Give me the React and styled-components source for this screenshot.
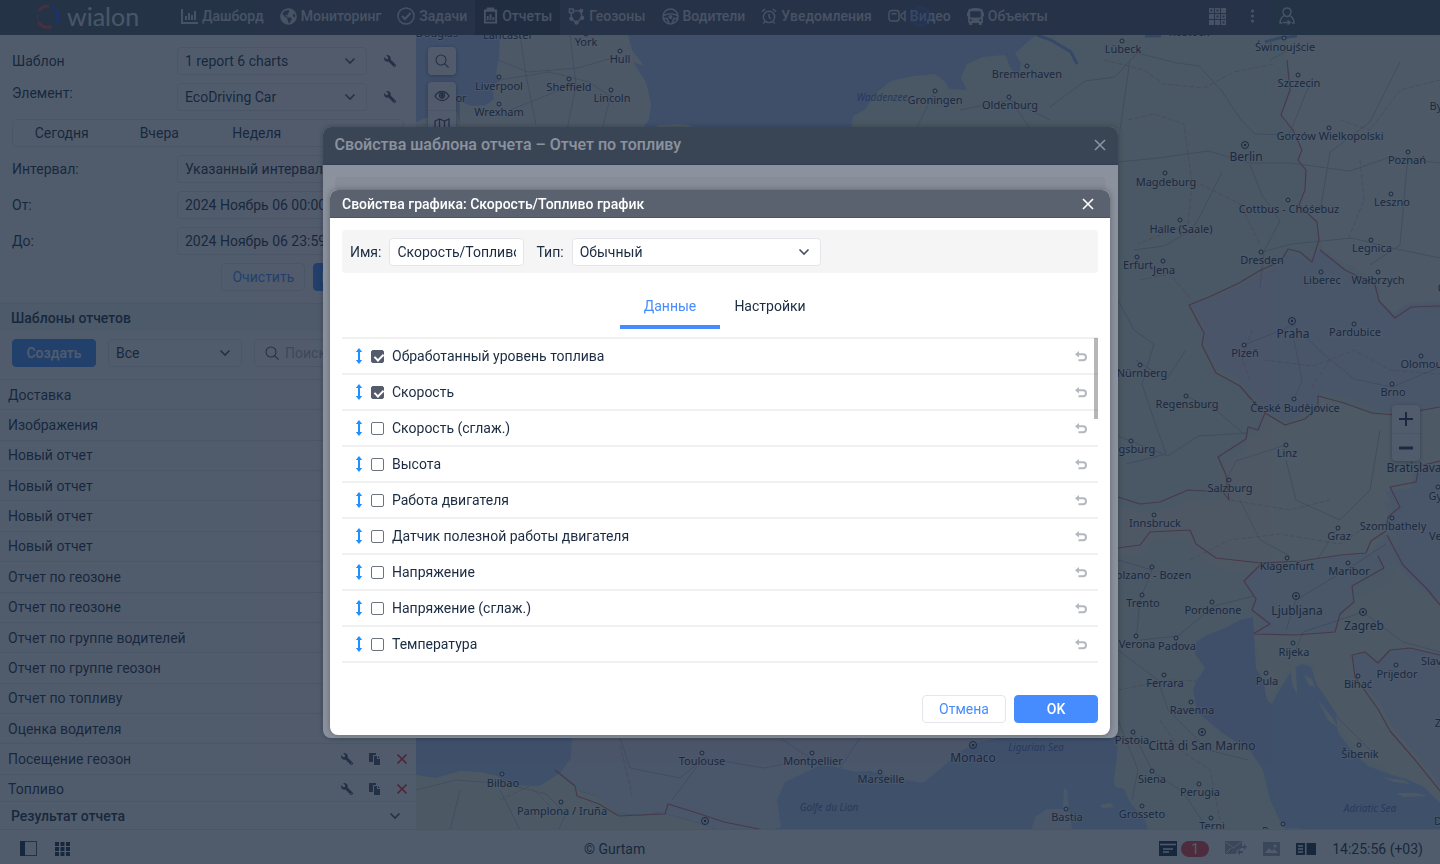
import React, { useState } from 'react';
import styled, { createGlobalStyle, css } from 'styled-components';
import { FaWrench, FaGlobeAmericas, FaBus } from 'react-icons/fa';

const GlobalStyle = createGlobalStyle`
  * {
    box-sizing: border-box;
  }
  body {
    margin: 0;
    font-family: Roboto, "Liberation Sans", sans-serif;
    font-size: 14px;
    line-height: 20px;
    color: #1b2b41;
    overflow: hidden;
  }
  button, input, select {
    font: inherit;
    color: inherit;
    margin: 0;
  }
`;

const Page = styled.div`
  display: flex;
  flex-direction: column;
  height: 100vh;
  background: #fff;
`;

const TopBar = styled.header`
  display: flex;
  height: 35px;
  flex: none;
  background: #535b6a;
  color: #d5d9df;
  padding-right: 145px;
`;

const Logo = styled.a`
  display: flex;
  align-items: center;
  gap: 7px;
  width: 173px;
  padding: 0 0 3px 35px;
  color: #e2e5ea;
  text-decoration: none;
  font-family: Lato, sans-serif;
  font-size: 25px;
  line-height: 28px;
`;

const Nav = styled.nav`
  display: flex;
  flex: 1;
`;

const NavItem = styled.a`
  position: relative;
  display: flex;
  align-items: center;
  gap: 4px;
  padding: 0 8px 3px;
  color: inherit;
  text-decoration: none;
  font-weight: 500;
  background: ${(p) => (p.$active ? '#39414f' : 'transparent')};
  svg {
    flex: none;
  }
`;

const Pulse = styled.span`
  position: absolute;
  left: 30px;
  top: 6px;
  width: 21px;
  height: 21px;
  border-radius: 50%;
  border: 3px solid rgba(120, 150, 200, 0.2);
  background: rgba(40, 100, 220, 0.3);
`;

const TopIcons = styled.div`
  display: flex;
  align-items: center;
  gap: 18px;
  padding-bottom: 3px;
`;

const IconButton = styled.button`
  display: inline-flex;
  align-items: center;
  justify-content: center;
  padding: 0;
  border: 0;
  background: none;
`;

const Main = styled.main`
  display: flex;
  flex: 1;
  min-height: 0;
`;

const Sidebar = styled.aside`
  display: flex;
  flex-direction: column;
  width: 416px;
  flex: none;
  background: #fff;
`;

const Form = styled.div`
  display: grid;
  grid-template-columns: 153px 1fr;
  column-gap: 12px;
  row-gap: 8px;
  padding: 12px 12px;
`;

const Label = styled.label`
  line-height: ${(p) => (p.$top ? '20px' : '28px')};
`;

const FieldRow = styled.div`
  display: flex;
  gap: 17px;
`;

const field = css`
  width: 100%;
  height: 28px;
  padding: 0 7px;
  border: 1px solid #e3e6ea;
  border-radius: 4px;
  background: #fff;
`;

const TextInput = styled.input`
  ${field}
  &::placeholder {
    color: #a8adb5;
  }
`;

const SelectBox = styled.div`
  position: relative;
  width: ${(p) => p.$width || '100%'};
  select {
    ${field}
    appearance: none;
  }
  svg {
    position: absolute;
    right: 11px;
    top: 10px;
    pointer-events: none;
  }
`;

const SearchBox = styled.div`
  position: relative;
  flex: 1;
  svg {
    position: absolute;
    left: 11px;
    top: 7px;
  }
  input {
    padding-left: 30px;
  }
`;

const Segments = styled.div`
  grid-column: 1 / -1;
  display: flex;
  height: 28px;
  border: 1px solid #e3e6ea;
  border-radius: 4px;
  button {
    flex: 1;
    padding: 0;
    border: 0;
    background: none;
  }
`;

const Actions = styled.div`
  grid-column: 1 / -1;
  display: flex;
  justify-content: flex-end;
  gap: 8px;
`;

const Button = styled.button`
  height: 28px;
  min-width: 84px;
  padding: 0 7px;
  border-radius: 4px;
  border: 1px solid ${(p) => (p.$primary ? '#468cff' : '#e3e6ea')};
  background: ${(p) => (p.$primary ? '#468cff' : '#fff')};
  color: ${(p) => (p.$primary ? '#fff' : '#468cff')};
  font-weight: ${(p) => (p.$primary ? 500 : 400)};
`;

const SectionHead = styled.h2`
  position: relative;
  display: flex;
  align-items: center;
  justify-content: space-between;
  margin: 0;
  height: 28px;
  flex: none;
  padding: 0 15px 0 11px;
  border-top: 1px solid #e6e8ec;
  background: ${(p) => (p.$plain ? '#fff' : '#f3f4f6')};
  font-size: 14px;
  font-weight: 500;
`;

const Toolbar = styled.div`
  display: flex;
  gap: 12px;
  padding: 8px 12px 12px;
  border-bottom: 1px solid #e6e8ec;
`;

/* the last row slides a little under the result header */
const TemplateList = styled.ul`
  display: flex;
  flex-direction: column;
  flex: 1;
  min-height: 0;
  margin: 0 0 -4px;
  padding: 0;
  list-style: none;
`;

const TemplateRow = styled.li`
  display: flex;
  align-items: center;
  flex: 1;
  padding: 0 9px 0 8px;
  border-bottom: 1px solid #e6e8ec;
  span {
    flex: 1;
  }
`;

const RowTools = styled.div`
  display: flex;
  gap: 16px;
`;

const MapArea = styled.section`
  position: relative;
  flex: 1;
  min-width: 0;
  overflow: hidden;
  background: #b4cef4;
  > svg {
    display: block;
    width: 100%;
    height: 100%;
  }
  text {
    font-family: "Noto Sans", sans-serif;
    font-size: 11px;
    fill: #26304a;
    stroke: rgba(255, 255, 255, 0.5);
    stroke-width: 2px;
    paint-order: stroke;
    text-anchor: middle;
  }
  .capital {
    font-size: 12px;
  }
  .sea {
    font-size: 10px;
    font-style: italic;
    fill: #5575c0;
    stroke: none;
  }
`;

const MapControls = styled.div`
  position: absolute;
  left: ${(p) => p.$left || 'auto'};
  right: ${(p) => p.$right || 'auto'};
  top: ${(p) => p.$top};
  width: 28px;
  border-radius: 4px;
  background: #fff;
  box-shadow: 0 1px 4px rgba(0, 0, 0, 0.4);
  button {
    width: 28px;
    height: 28px;
  }
  button + button {
    border-top: 1px solid #e3e6ea;
  }
`;

const Footer = styled.footer`
  display: flex;
  align-items: center;
  justify-content: space-between;
  height: 35px;
  flex: none;
  padding: 3px 17px 0 20px;
  border-top: 1px solid #e0e3e8;
  background: #fff;
`;

const FooterGroup = styled.div`
  display: flex;
  align-items: center;
  gap: ${(p) => p.$gap};
`;

const Badge = styled.span`
  width: 28px;
  height: 16px;
  border-radius: 8px;
  margin-left: -12px;
  background: #f04040;
  color: #fff;
  font-size: 14px;
  line-height: 16px;
  text-align: center;
`;

const Backdrop = styled.div`
  position: fixed;
  inset: 0;
  display: flex;
  align-items: center;
  justify-content: center;
  padding-top: ${(p) => p.$top || '0'};
  background: rgba(23, 38, 60, 0.5);
`;

const Dialog = styled.section`
  width: ${(p) => p.$width};
  min-height: ${(p) => p.$minHeight || '0'};
  border-radius: 8px;
  overflow: hidden;
  background: #fff;
  box-shadow: 0 0 6px rgba(0, 0, 0, 0.3);
`;

const DialogHead = styled.header`
  display: flex;
  align-items: center;
  justify-content: space-between;
  height: ${(p) => (p.$big ? '38px' : '28px')};
  padding: ${(p) => (p.$big ? '0 12px' : '0 16px 0 12px')};
  border-bottom: 1px solid #49566a;
  background: #5b626f;
  color: #fff;
  h1 {
    margin: 0;
    font-size: ${(p) => (p.$big ? '16px' : '14px')};
    font-weight: 500;
  }
`;

const DialogBody = styled.div`
  padding: 12px;
`;

const FilterBar = styled.div`
  display: flex;
  align-items: center;
  gap: 8px;
  height: 43px;
  padding: 0 8px;
  border-radius: 4px;
  background: #f5f5f5;
`;

const NameField = styled.div`
  width: 135px;
  margin-right: 4px;
`;

const Tabs = styled.div`
  display: flex;
  justify-content: center;
  padding: 8px 0;
`;

const Tab = styled.button`
  width: 100px;
  height: 48px;
  padding: 5px 0 0;
  border: 0;
  border-bottom: 4px solid ${(p) => (p.$active ? '#468cff' : 'transparent')};
  background: none;
  color: ${(p) => (p.$active ? '#468cff' : 'inherit')};
`;

const SeriesWrap = styled.div`
  position: relative;
  border-top: 2px solid #f0f0f0;
`;

const SeriesRow = styled.div`
  display: flex;
  align-items: center;
  height: 36px;
  padding: 0 11px 0 13px;
  border-bottom: 2px solid #f0f0f0;
  label {
    flex: 1;
    margin-left: 8px;
  }
`;

const ScrollThumb = styled.div`
  position: absolute;
  right: 0;
  top: -1px;
  width: 4px;
  height: 81px;
  background: rgba(110, 110, 115, 0.5);
`;

const Checkbox = styled.input`
  appearance: none;
  position: relative;
  width: 13px;
  height: 13px;
  margin: 1px 0 0 8px;
  border: 1px solid #6d7480;
  border-radius: 2px;
  background: #fff;
  &:checked {
    border-color: #545c6b;
    background: #545c6b;
  }
  &:checked::after {
    content: "";
    position: absolute;
    left: 4px;
    top: 1px;
    width: 4px;
    height: 7px;
    border: solid #fff;
    border-width: 0 2px 2px 0;
    transform: rotate(45deg);
  }
`;

const DialogActions = styled.div`
  display: flex;
  justify-content: flex-end;
  gap: 8px;
  padding-top: 32px;
`;

const Chevron = () => (
  <svg width="12" height="8" viewBox="0 0 12 8" fill="none" stroke="#465061" strokeWidth="1.6">
    <path d="M1.5 1.5 6 6l4.5-4.5" />
  </svg>
);

const Close = () => (
  <svg width="12" height="12" viewBox="0 0 12 12" fill="none" stroke="#fff" strokeWidth="1.6">
    <path d="M1 1l10 10M11 1 1 11" />
  </svg>
);

const SearchIcon = () => (
  <svg width="14" height="14" viewBox="0 0 14 14" fill="none" stroke="#465061" strokeWidth="1.1">
    <circle cx="6" cy="6" r="5" />
    <path d="m9.6 9.6 4 4" />
  </svg>
);

const Wrench = () => <FaWrench size={12} color="#465061" transform="scale(-1 1)" />;

const MoveIcon = () => (
  <svg width="8" height="16" viewBox="0 0 8 16" fill="#1e90ff">
    <path d="M4 0 7.2 4H5v8h2.200L4 16 .8 12H3V4H.8z" />
  </svg>
);

const UndoIcon = () => (
  <svg width="12" height="11" viewBox="0 0 12 11">
    <path d="M4 0v6.400L0 3.200z" fill="#b4b9c0" />
    <path d="M3.500 3.200H8a3 3 0 0 1 0 6H3.500" fill="none" stroke="#b4b9c0" strokeWidth="2" />
  </svg>
);

const LogoMark = () => (
  <svg width="25" height="25" viewBox="0 0 25 25" fill="none" strokeWidth="3">
    <path d="M4 7A10 10 0 0 1 14 2.300" stroke="#e04848" />
    <path d="M2.500 11a10.500 10.500 0 0 0 1 6" stroke="#d04860" strokeWidth="1" />
    <path d="M3.500 18a10 10 0 0 0 13 4.300" stroke="#e04848" />
    <path d="M16.500 3.500A10 10 0 0 1 20 20" stroke="#2858e8" />
  </svg>
);

const ChartIcon = () => (
  <svg width="17" height="15" viewBox="0 0 17 15" fill="currentColor">
    <path d="M0 0h2v13h15v2H0zM4 7h2v4H4zM7 4h2v7H7zM10 6h2v5h-2zM13 2h2v9h-2z" />
  </svg>
);

const TaskIcon = () => (
  <svg width="18" height="18" viewBox="0 0 18 18" fill="none" stroke="currentColor">
    <circle cx="9" cy="9" r="8" strokeWidth="1.5" />
    <path d="m5 9 3 3 5.500-6" strokeWidth="2" />
  </svg>
);

const ReportIcon = () => (
  <svg width="15" height="18" viewBox="0 0 16 18" fill="currentColor">
    <path fillRule="evenodd" d="M1 2h3V0h8v2h3v15H1zM3 4.500V15h10V4.500zM4 9h2v4.500H4zm3-2h2v6.500H7zm3 3h2v3.500h-2z" />
  </svg>
);

const GeofenceIcon = () => (
  <svg width="17" height="19" viewBox="0 0 18 19" fill="none" stroke="currentColor" strokeWidth="1.5">
    <path d="M3.500 5v7L9 16l6-5-1.500-7.500H5" />
    <rect x="1.5" y="1.5" width="4" height="4" fill="#535b6a" />
    <circle cx="14" cy="3.5" r="1.5" fill="currentColor" />
    <circle cx="15" cy="11" r="1.5" fill="currentColor" />
    <circle cx="9" cy="16" r="1.5" fill="currentColor" />
    <circle cx="3.5" cy="12" r="1.5" fill="currentColor" />
  </svg>
);

const WheelIcon = () => (
  <svg width="17" height="17" viewBox="0 0 17 17" fill="none" stroke="currentColor">
    <circle cx="8.5" cy="8.5" r="7.500" strokeWidth="1.5" />
    <path d="M1.500 7.500c4-2 10-2 14 0M2 10.500h3l2 5M15 10.500h-3l-2 5" strokeWidth="1.6" />
    <circle cx="8.5" cy="9" r="1.5" fill="currentColor" />
  </svg>
);

const AlarmIcon = () => (
  <svg width="16" height="18" viewBox="0 0 17 18" fill="none" stroke="currentColor" strokeWidth="1.5">
    <circle cx="8.5" cy="10" r="6" />
    <path d="M8.500 6.500V10l2 2M1 4.500 4.500 1.500M16 4.500l-3.500-3M4 15l-1.500 2M13 15l1.500 2" />
  </svg>
);

const VideoIcon = () => (
  <svg width="18" height="14" viewBox="0 0 18 14" fill="none" stroke="currentColor" strokeWidth="1.4">
    <rect x="1" y="1.5" width="10" height="10.5" rx="2.5" />
    <path d="M3.500 4.800h5M13 6l4-3.500v9L13 8z" />
  </svg>
);

const AppsIcon = () => (
  <svg width="17" height="17" viewBox="0 0 17 17" fill="none" stroke="currentColor" strokeWidth="1.5">
    {[0, 6, 12].map((y, row) =>
      [0, 6, 12].map((x, col) => (
        <rect
          key={x + '-' + y}
          x={x + 0.75}
          y={y + 0.75}
          width="3.5"
          height="3.5"
          fill={['001', '100', '110'][row][col] === '1' ? 'currentColor' : 'none'}
        />
      ))
    )}
  </svg>
);

const DotsIcon = () => (
  <svg width="17" height="14" viewBox="0 0 17 14" fill="currentColor">
    <circle cx="8.5" cy="2" r="1.6" />
    <circle cx="8.5" cy="7" r="1.6" />
    <circle cx="8.5" cy="12" r="1.6" />
  </svg>
);

const UserIcon = () => (
  <svg width="16" height="18" viewBox="0 0 16 18" fill="none" stroke="currentColor" strokeWidth="1.5">
    <path d="M5 8C2.500 4 4.500 1 8 1s5.500 3 3 7c-.6 1-1.800 1.500-3 1.500S5.600 9 5 8zM4.500 9C2 11 1 13 1 16h2.500M11.500 9c2.500 2 3.500 4 3.500 7h-2" />
    <path d="M4 15.500h6" />
    <path d="m8.500 12.500 4 3-4 3z" fill="currentColor" stroke="none" />
  </svg>
);

const CopyIcon = () => (
  <svg width="12" height="12" viewBox="0 0 12 12" fill="#465061">
    <path d="M0 0h7v2H4v7H0z" />
    <path d="M5 3h3v3h3v6H5zM9 3l2 2H9z" />
  </svg>
);

const DeleteIcon = () => (
  <svg width="10" height="10" viewBox="0 0 10 10" fill="none" stroke="#e83030" strokeWidth="1.6">
    <path d="m.5.5 9 9M9.500.5l-9 9" />
  </svg>
);

const EyeIcon = () => (
  <svg width="16" height="12" viewBox="0 0 16 12" fill="none" stroke="#465061" strokeWidth="1.3">
    <path d="M1 6c3.500-6 10.500-6 14 0-3.500 6-10.500 6-14 0z" />
    <circle cx="8" cy="5.5" r="2.5" />
    <circle cx="8" cy="5.5" r="1" fill="#465061" />
  </svg>
);

const LayersIcon = () => (
  <svg width="16" height="14" viewBox="0 0 16 14" fill="none" stroke="#465061" strokeWidth="1.3">
    <path d="m1 3 4.500-2 5 2L15 1v10l-4.500 2-5-2L1 13zM5.500 1v10M10.500 3v10" />
  </svg>
);

const navItems = [
  { name: 'Дашборд', icon: <ChartIcon /> },
  { name: 'Мониторинг', icon: <FaGlobeAmericas size={17} /> },
  { name: 'Задачи', icon: <TaskIcon /> },
  { name: 'Отчеты', icon: <ReportIcon />, active: true },
  { name: 'Геозоны', icon: <GeofenceIcon /> },
  { name: 'Водители', icon: <WheelIcon /> },
  { name: 'Уведомления', icon: <AlarmIcon /> },
  { name: 'Видео', icon: <VideoIcon />, pulse: true },
  { name: 'Объекты', icon: <FaBus size={17} /> },
];

const templates = [
  'Доставка', 'Изображения', 'Новый отчет', 'Новый отчет', 'Новый отчет', 'Новый отчет',
  'Отчет по геозоне', 'Отчет по геозоне', 'Отчет по группе водителей', 'Отчет по группе геозон',
  'Отчет по топливу', 'Оценка водителя', 'Посещение геозон', 'Топливо',
];

const series = [
  'Обработанный уровень топлива', 'Скорость', 'Скорость (сглаж.)', 'Высота', 'Работа двигателя',
  'Датчик полезной работы двигателя', 'Напряжение', 'Напряжение (сглаж.)', 'Температура',
];

// name, label x, label baseline, marker x, marker y
const cities = [
  ['Lancaster', 508, 39], ['Douglas', 437, 37], ['York', 586, 46, 586, 34], ['Hull', 620, 63, 620, 51],
  ['Liverpool', 499, 90, 499, 77], ['Sheffield', 569, 91, 569, 79], ['Lincoln', 612, 102, 611, 90],
  ['Wrexham', 499, 116, 499, 104], ['or', 461, 102], ['Groningen', 935, 104, 935, 91],
  ['Oldenburg', 1010, 109, 1009, 97], ['Bremerhaven', 1027, 78, 1027, 66], ['Rostock', 1189, 36],
  ['Lübeck', 1123, 53, 1122, 41], ['Świnoujście', 1285, 51, 1284, 38], ['Szczecin', 1299, 87, 1298, 75],
  ['Gorzów Wielkopolski', 1330, 140, 1329, 128], ['Poznań', 1407, 164, 1408, 152], ['By', 1436, 110],
  ['Magdeburg', 1166, 186, 1165, 173], ['Cottbus - Chóśebuz', 1289, 213, 1288, 200],
  ['Leszno', 1392, 206, 1391, 194], ['Halle (Saale)', 1181, 233, 1180, 220], ['Dresden', 1262, 264, 1261, 252],
  ['Legnica', 1372, 252, 1371, 240], ['Erfurt', 1138, 269, 1137, 257], ['Jena', 1164, 274, 1163, 261],
  ['Liberec', 1322, 284, 1321, 272], ['Wałbrzych', 1378, 284, 1378, 272], ['O', 1442, 292],
  ['Pardubice', 1355, 336, 1354, 324], ['Plzeň', 1245, 357, 1244, 345], ['Olomouc', 1424, 368, 1421, 356],
  ['Nürnberg', 1142, 377, 1140, 365], ['Brno', 1393, 396, 1392, 384], ['Regensburg', 1187, 408, 1186, 396],
  ['České Budějovice', 1295, 412, 1294, 399], ['Augsburg', 1130, 453, 1131, 441], ['Linz', 1287, 457, 1286, 445],
  ['Salzburg', 1230, 492, 1229, 480], ['Győr', 1441, 500, 1438, 487], ['Innsbruck', 1155, 527, 1154, 515],
  ['Szombathely', 1393, 530, 1392, 518], ['Graz', 1339, 540, 1338, 528], ['Ves', 1438, 540],
  ['Klagenfurt', 1287, 570, 1287, 558], ['Maribor', 1349, 575, 1348, 563], ['Bolzano - Bozen', 1150, 579, 1152, 567],
  ['Trento', 1143, 607, 1142, 595], ['Pordenone', 1213, 614, 1212, 602], ['Verona', 1137, 648, 1136, 636],
  ['Padova', 1177, 650, 1176, 638], ['Rijeka', 1294, 656, 1293, 643], ['Slavonski', 1445, 665],
  ['Prijedor', 1397, 678, 1396, 665], ['Bihać', 1358, 688, 1358, 676], ['Ferrara', 1165, 687, 1164, 675],
  ['Pula', 1267, 685, 1266, 673], ['Ravenna', 1192, 714, 1191, 702], ['Pistoia', 1132, 744, 1133, 732],
  ['Šibenik', 1360, 758, 1359, 745], ['Siena', 1152, 783, 1152, 771], ['Perugia', 1200, 796, 1199, 784],
  ['Grosseto', 1142, 818, 1142, 806], ['Terni', 1212, 830, 1211, 818], ['Pescara', 1282, 835, 1283, 824],
  ['Bastia', 1067, 821, 1066, 809], ['Marseille', 881, 783, 880, 772], ['Montpellier', 813, 765, 812, 753],
  ['Toulouse', 702, 765, 702, 753], ['Bilbao', 503, 787, 502, 774], ['Pamplona / Iruña', 562, 815, 561, 802],
  ['Z', 1438, 727], ['D', 1438, 825],
];

const capitals = [
  ['Berlin', 1246, 161, 1245, 145], ['Praha', 1293, 338, 1292, 321], ['Bratislava', 1414, 472],
  ['Ljubljana', 1297, 615, 1296, 596], ['Zagreb', 1364, 630, 1363, 612], ['Monaco', 973, 762, 973, 745],
  ['Città di San Marino', 1202, 750, 1202, 732], ['', 705, 829, 705, 821],
];

const seas = [
  ['Waddenzee', 882, 101], ['Ligurian Sea', 1036, 751], ['Golfe du Lion', 829, 811], ['Adriatic Sea', 1370, 812],
];

const regions = [
  // Great Britain
  ['#eef1e4', 'M500 35H628l4 15 12 16-11-4 13 20 5 22-2 16-8 10-3 0H460v-28l12 4 14-1 8-6-2-12 8-6-4-8 3-16z'],
  ['#eef1e4', 'M655 135l2-10 20-1 12 1 12 6 8 14h-50zM416 122l20-8 20-4 8 28h-48z'],
  // Germany, the Low Countries and Italy
  ['#e2efdc', 'M850 140l3-24 12-6 10-16 16-13 22-5 22-2 10 8 4 7 18 1-6-12 6-14 16-7 22-2 6 14 8 8 2-14-6-10 16-14 6-4h415v794H1148l-4-12-12-12-8-16-9-2-2-20-7-28-6-12v-600z'],
  ['#f3f2ea', 'M1287 35l2 27 2 28-10 25 12 15 9 20-4 10 8 10-1 20-6 15 18 17 2 18 8 14 22 10 30 20 2 18 20 16 45-6V35z'],
  ['#e2e6f7', 'M1190 305l25-8 25-11 15-9 25-12 5-10 12 1 12 8 4-9 2-6 12 3 14 15 29 14 5 16 16 18 16-12 34-1v108l-44 2-22-4-31-11-23-6v13l-15 10-22 6-18-13-13-13-11-14-24-13-15-28 1-15z'],
  ['#f1f3e3', 'M1265 413l20 13 20-6 13-12v-11l26 7 28 10 23 2 45-8v70l-25 5-3 17-28 3 10 20-7 12-2 20-15 9-30 1-40 7-40 1-45-5-20-14-4-16-38 2-10 13-24 4v-52l22 9 20-3 30-12 35 4-2-16-8-18 29-18 2-14 10-3z'],
  ['#e0e8f0', 'M1260 565l40-2 40-7 30-2 15-20 6 2 9 14-10 20-38 15 2 14-14 18-5 16-40 2-38 1-4-9 17-1-20-16 5-8-10-22z'],
  ['#e3e3f3', 'M1440 465l-26 6-3 17-26 3 8 18-9 16 16 14-6 22 24 26 24 14z'],
  ['#eef0e2', 'M1254 634l40 1 40-3 8-20 12-14 36-14 6-20 18 20 26 20v200l-16-14-20-15-22-9-20-10-15-20-16-16-2-20-13-15-2-20-15-3-10 6-15 24-7 5-4-18z'],
  ['#e3e3f3', 'M1352 655l13-3 13 11 12-13 20-2 30 7v130l-22-28-26-30-12-23-24-28z'],
  // France, Spain and Corsica
  ['#e7e4f1', 'M572 738l-1 20-11 15 20 18 16 4 22 18 22 2 20-3 30 8 35 12 56-4-4-28 8-18 38-18 32 8 16-1 22 7 30 5 16-13 22-19 18-9 20-4z'],
  ['#eef0e0', 'M416 775l20 3 24-7 20 1 17 4 14 9 28 1 20-12 22 18 16 4 22 18 22 2 20-3 30 8 35 12 50-5v10H416z'],
  ['#e7e4f1', 'M1030 835l5-18 12-8 16 0 1-20 3 0 2 20 4 26z'],
];

// the Adriatic lies over the land shapes above
const adriatic =
  'M1253 617l-13 3-15 8-20 8-9 6-1 12 10 14-9 14-3 8 4 22 24 20 30 20 12 18 7 30 12 25 8 10h150v-32l-16-16-18-8-14-4-24-9-16-15-14-18-2-18-10-16-10-16-5-16-9-3-10 6-15 24-5 10-5-4-4-20-7-12z';

const borders = [
  'M1287 60l3 30-9 25 12 15 9 20-4 10 8 10-1 20-6 15 18 17 2 18-7 22-12-10-12-3-7 12-22 10-20 12-30 14-20 8 15 28-2 12 14 28 24 13 12 14 13 13 20 12 20-6 13-12v-11l26 7 28 10 23 2 45-8',
  'M1265 413l-7 17-10-3-2 12-28 18 8 18 3 25-6-8-35-2-28 12-20 2-22-7M1118 548l22-3 10-13 40-2 6 14 20 14 45 5 40-2 40-6 25-2 5-12 15-10 2-14 12-10-10-20 26-5 3-16 26-6',
  'M1260 565l-16 16 12 18-4 11 18 14-17 10 42 1 40-3 5-18 14-12-2-16 32-18-6-12M1387 535l16 30 24 24 13 16M1352 655l13-3 13 11 12-13 20-2 30 7M1352 655l3 22 23 32 12 22 26 30 24 30',
  'M1320 250l25 20 30 15 4 16 16 17 16-11 29-1M555 770l20 16 2 10 22 8 20 12 22-1 24-1 3-10 26 8 30 10 30 6 20 4',
];

const roads = [
  'M1050 107l35-26 30-4 22-24 40 10 22 3 22 24 20 30 14 14 34 1 16-40 8-18',
  'M1118 162l40-4 50-7 42 12h40l60 8 40-14 50 6M1250 165l12 30 18 26-16 30-4 36M1222 172l-20 40-10 18-28 16-30 4M1262 252l30-8 60-6 40 10 48 10',
  'M1118 300l16 30 20 14-12 40 10 30 14 40-40 10M1186 396l30 14 28 24M1186 350l-20 30-30-20M1244 345l50-20 26 26 34 28 38 8 48-20M1292 330l10 50-8 20',
  'M1118 436l50 20 30-20 50-3M1286 445l-50 16-10 20M1286 460l10 40 44 20 30-30 10-60M1240 500l20 40 30 16M1140 640l38-4 36-30 40-10M1118 650l40 30 10 30 40 40 40 10',
  'M1133 732l20 40 30 20 20 30M1118 720l20 50-6 30M1296 600l50-30 40-26M1296 600l-10 30M1363 612l-60 20-8 20M1363 612l40 30 37 10',
  'M498 60l30 12 50-4 34-10M520 35l6 40 10 50M570 35l6 50-10 50M499 80l50-8 40 10 30 20M510 110l50-20M612 90l-10 40M960 110l50-10 40 20M935 91l-20 40M1009 97l20 30',
  'M416 790l40-10 50 4 40 10 20 20-10 20M620 738l10 30 50 10 24-20 60 10 50-10M702 760l-30 40M780 738l30 20M860 738l-20 30M500 790l20 40M460 790l-10 40',
  'M1400 62l-30 60-40 30-10 60M1408 155l-8 90-30 20M1130 60l-10 70M1270 60l30-16M1118 560l34 10-12 30-4 40M1320 690l20 30 30 30M1338 528l-20 30',
];

const provinces = [
  'M1104 60l40 10 20 14 40 4 30-16 40-8M1128 120l26-6 30 10 8 60-4 40-50 20M1200 184l40 20 20 40M1340 120l30 10 30-40 40-10M1360 160l4 40-16 40M1264 360l50 6 40-16 36 20 50 4M1250 380l-8-20 10-30M1330 360l-20 30',
  'M1190 560l40-20 50-6 60 10 30-20M1230 500l60 10 40-10M1118 690l50-10 60 2M1160 720l20 30 30 20 10 50M500 800l30-14 30 30M620 745l12 50M1140 280l30-6 20 24',
];

const islands =
  'M1290 662l6 8 1 24-5-10zM1304 675l8 4 3 8-6-2zM1318 700l16 20 4 8-10-8zM1385 768l16-2 8 6-18 2zM1384 778l20 2 6 4-16-2zM1396 793l20 0 12 3-24 1zM1100 805l10-2 4 4-12 1zM1118 828l4-2';

const Map = () => (
  <svg viewBox="416 35 1024 794" preserveAspectRatio="xMinYMin slice">
    {regions.map(([fill, d]) => (
      <path key={d} d={d} fill={fill} />
    ))}
    <path d="M1095 738h25l-6 40h-80z" fill="#b4cef4" />
    <path d="M1118 738h60v91h-30l-4-12-12-12-8-16-8-14z" fill="#e6eee0" />
    <g fill="none" stroke="#8f95b8" strokeWidth="1" opacity="0.5" strokeLinejoin="round">
      {roads.map((d) => (
        <path key={d} d={d} />
      ))}
    </g>
    <g fill="none" stroke="#d08f94" strokeWidth="1" strokeDasharray="5 2" opacity="0.5">
      {provinces.map((d) => (
        <path key={d} d={d} />
      ))}
    </g>
    <g fill="none" stroke="#d8727c" strokeWidth="1.2" strokeLinejoin="round">
      {borders.map((d) => (
        <path key={d} d={d} />
      ))}
    </g>
    <path d={adriatic} fill="#b4cef4" />
    <path d={islands} fill="#eef0e2" />
    <path d="M1037 35l14 5 20 12 6 12M1145 36h16M1265 42l14-4 18-2" fill="none" stroke="#8fb0ea" strokeWidth="3" />
    {cities.map(([name, x, y, mx, my]) => (
      <g key={name + y}>
        {mx && <circle cx={mx} cy={my} r="2" fill="#fff" stroke="#26304a" />}
        <text x={x} y={y}>{name}</text>
      </g>
    ))}
    {capitals.map(([name, x, y, mx, my]) => (
      <g key={name + y}>
        {mx && <circle cx={mx} cy={my} r="3.5" fill="none" stroke="#26304a" />}
        {mx && <circle cx={mx} cy={my} r="1.2" fill="#26304a" />}
        <text className="capital" x={x} y={y}>{name}</text>
      </g>
    ))}
    {seas.map(([name, x, y]) => (
      <text key={name} className="sea" x={x} y={y}>{name}</text>
    ))}
  </svg>
);

const Select = ({ id, value, width, label }) => (
  <SelectBox $width={width}>
    <select id={id} aria-label={label}>
      <option>{value}</option>
    </select>
    <Chevron />
  </SelectBox>
);

const Header = () => (
  <TopBar>
    <Logo href="#"><LogoMark />wialon</Logo>
    <Nav>
      {navItems.map((item) => (
        <NavItem key={item.name} href="#" $active={item.active}>
          {item.icon}
          {item.name}
          {item.pulse && <Pulse />}
        </NavItem>
      ))}
    </Nav>
    <TopIcons>
      <IconButton aria-label="Приложения"><AppsIcon /></IconButton>
      <IconButton aria-label="Меню"><DotsIcon /></IconButton>
      <IconButton aria-label="Пользователь"><UserIcon /></IconButton>
    </TopIcons>
  </TopBar>
);

const ReportPanel = () => (
  <Sidebar>
    <Form>
      <Label htmlFor="template">Шаблон</Label>
      <FieldRow>
        <Select id="template" value="1 report 6 charts" width="190px" />
        <IconButton aria-label="Настроить шаблон"><Wrench /></IconButton>
      </FieldRow>
      <Label htmlFor="unit" $top>Элемент:</Label>
      <FieldRow>
        <Select id="unit" value="EcoDriving Car" width="190px" />
        <IconButton aria-label="Настроить элемент"><Wrench /></IconButton>
      </FieldRow>
      <Segments>
        <button>Сегодня</button>
        <button>Вчера</button>
        <button>Неделя</button>
        <button aria-label="Месяц" />
      </Segments>
      <Label htmlFor="interval">Интервал:</Label>
      <Select id="interval" value="Указанный интервал" />
      <Label htmlFor="from">От:</Label>
      <TextInput id="from" defaultValue="2024 Ноябрь 06 00:00" />
      <Label htmlFor="to">До:</Label>
      <TextInput id="to" defaultValue="2024 Ноябрь 06 23:59" />
      <Actions>
        <Button>Очистить</Button>
        <Button $primary>Выполнить</Button>
      </Actions>
    </Form>
    <SectionHead>Шаблоны отчетов</SectionHead>
    <Toolbar>
      <Button $primary>Создать</Button>
      <Select label="Фильтр" value="Все" width="134px" />
      <SearchBox>
        <SearchIcon />
        <TextInput aria-label="Поиск" placeholder="Поиск" />
      </SearchBox>
    </Toolbar>
    <TemplateList>
      {templates.map((name, i) => (
        <TemplateRow key={i}>
          <span>{name}</span>
          <RowTools>
            <IconButton aria-label="Свойства"><Wrench /></IconButton>
            <IconButton aria-label="Копировать"><CopyIcon /></IconButton>
            <IconButton aria-label="Удалить"><DeleteIcon /></IconButton>
          </RowTools>
        </TemplateRow>
      ))}
    </TemplateList>
    <SectionHead $plain>Результат отчета<Chevron /></SectionHead>
  </Sidebar>
);

const StatusBar = () => (
  <Footer>
    <FooterGroup $gap="18px">
      <IconButton aria-label="Панель">
        <svg width="17" height="15" viewBox="0 0 17 15">
          <rect x=".5" y=".5" width="16" height="14" fill="none" stroke="#465061" />
          <path d="M0 0h5v15H0z" fill="#1b2b41" />
        </svg>
      </IconButton>
      <IconButton aria-label="Сетка">
        <svg width="15" height="14" viewBox="0 0 15 14" fill="#1b2b41">
          <path d="M0 0h4v4H0zM5.500 0h4v4h-4zM11 0h4v4h-4zM0 5h4v4H0zM5.500 5h4v4h-4zM11 5h4v4h-4zM0 10h4v4H0zM5.500 10h4v4h-4zM11 10h4v4h-4z" />
        </svg>
      </IconButton>
    </FooterGroup>
    <span>© Gurtam</span>
    <FooterGroup $gap="16px">
      <IconButton aria-label="Сообщения">
        <svg width="18" height="15" viewBox="0 0 18 15">
          <path d="M0 0h18v15H0z" fill="#1b2b41" />
          <path d="M1 3.500h16M4 8h10M4 11h6" stroke="#fff" strokeWidth="1.5" />
        </svg>
      </IconButton>
      <Badge>1</Badge>
      <IconButton aria-label="Почта">
        <svg width="22" height="15" viewBox="0 0 22 15">
          <path d="M0 0h17v7l-5 2-1 4H0z" fill="#a5abb5" />
          <path d="m1 1 7.500 6L16 1M1 12l5-5" stroke="#fff" fill="none" />
          <path d="m15 5 4 0 0-2 3 3-3 3V7h-4zM18 10h-3V8l-3 3 3 3.500V12h3z" fill="#a5abb5" />
        </svg>
      </IconButton>
      <IconButton aria-label="Изображения">
        <svg width="17" height="14" viewBox="0 0 17 14">
          <path d="M0 0h17v14H0z" fill="#a5abb5" />
          <path d="m2 11 4-5 3 3 2-2 4 4z" fill="#fff" />
          <circle cx="12" cy="4" r="1.5" fill="#fff" />
        </svg>
      </IconButton>
      <IconButton aria-label="Журнал">
        <svg width="20" height="12" viewBox="0 0 20 12">
          <path d="M0 0h9v12H0zM10.500 0H20v12h-9.500z" fill="#1b2b41" />
          <path d="M2 3h5M2 6h5M2 9h5" stroke="#fff" strokeWidth="1.3" />
        </svg>
      </IconButton>
      <time>14:25:56 (+03)</time>
    </FooterGroup>
  </Footer>
);

const ChartDialog = () => {
  const [checked, setChecked] = useState([0, 1]);

  const toggle = (i) => {
    setChecked(checked.includes(i) ? checked.filter((n) => n !== i) : [...checked, i]);
  };

  return (
    <Dialog role="dialog" $width="780px">
      <DialogHead>
        <h1>Свойства графика: Скорость/Топливо график</h1>
        <IconButton aria-label="Закрыть"><Close /></IconButton>
      </DialogHead>
      <DialogBody>
        <FilterBar>
          <label htmlFor="name">Имя:</label>
          <NameField>
            <TextInput id="name" defaultValue="Скорость/Топливо график" />
          </NameField>
          <label htmlFor="type">Тип:</label>
          <Select id="type" value="Обычный" width="249px" />
        </FilterBar>
        <Tabs role="tablist">
          <Tab role="tab" $active>Данные</Tab>
          <Tab role="tab">Настройки</Tab>
        </Tabs>
        <SeriesWrap>
          {series.map((name, i) => (
            <SeriesRow key={name}>
              <MoveIcon />
              <Checkbox type="checkbox" id={'s' + i} checked={checked.includes(i)} onChange={() => toggle(i)} />
              <label htmlFor={'s' + i}>{name}</label>
              <IconButton aria-label="Сбросить"><UndoIcon /></IconButton>
            </SeriesRow>
          ))}
          <ScrollThumb />
        </SeriesWrap>
        <DialogActions>
          <Button>Отмена</Button>
          <Button $primary>OK</Button>
        </DialogActions>
      </DialogBody>
    </Dialog>
  );
};

const App = () => {
  return (
    <>
      <GlobalStyle />
      <Page>
        <Header />
        <Main>
          <ReportPanel />
          <MapArea>
            <Map />
            <MapControls $left="12px" $top="12px">
              <IconButton aria-label="Найти"><SearchIcon /></IconButton>
            </MapControls>
            <MapControls $left="12px" $top="47px">
              <IconButton aria-label="Видимость"><EyeIcon /></IconButton>
              <IconButton aria-label="Слои"><LayersIcon /></IconButton>
            </MapControls>
            <MapControls $right="20px" $top="370px">
              <IconButton aria-label="Приблизить">
                <svg width="14" height="14" stroke="#26304a" strokeWidth="2"><path d="M0 7h14M7 0v14" /></svg>
              </IconButton>
              <IconButton aria-label="Отдалить">
                <svg width="14" height="14" stroke="#26304a" strokeWidth="3"><path d="M0 7h14" /></svg>
              </IconButton>
            </MapControls>
          </MapArea>
        </Main>
        <StatusBar />
      </Page>
      <Backdrop>
        <Dialog role="dialog" $width="795px" $minHeight="611px">
          <DialogHead $big>
            <h1>Свойства шаблона отчета – Отчет по топливу</h1>
            <IconButton aria-label="Закрыть"><Close /></IconButton>
          </DialogHead>
          <DialogBody>
            <FilterBar />
          </DialogBody>
        </Dialog>
      </Backdrop>
      <Backdrop $top="61px">
        <ChartDialog />
      </Backdrop>
    </>
  );
};

export default App;
